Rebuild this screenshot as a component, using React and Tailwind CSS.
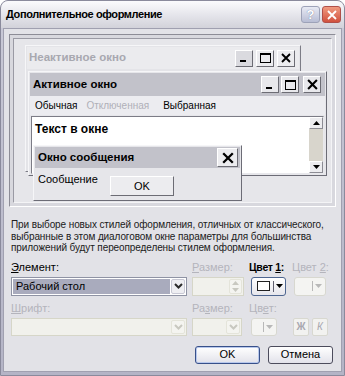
import React from "react";

const ui = "font-['Liberation_Sans',Arial,sans-serif]";

function MinGlyph() {
  return (
    <svg width="10" height="10" viewBox="0 0 10 10">
      <rect x="1" y="7" width="6" height="2" fill="#000" />
    </svg>
  );
}

function MaxGlyph() {
  return (
    <svg width="11" height="10" viewBox="0 0 11 10">
      <rect x="0.5" y="0.5" width="10" height="9" fill="none" stroke="#000" />
      <rect x="0" y="0" width="11" height="2" fill="#000" />
    </svg>
  );
}

function CloseGlyph({ size = 10 }) {
  return (
    <svg width={size} height={size} viewBox="0 0 10 10">
      <path d="M1 1 L9 9 M9 1 L1 9" stroke="#000" strokeWidth="1.9" />
    </svg>
  );
}

function CapBtn({ children, className = "" }) {
  return (
    <div
      className={`w-[18px] h-[17px] flex items-center justify-center border border-t-white border-l-white border-r-[#6c6c74] border-b-[#6c6c74] ${className}`}
    >
      {children}
    </div>
  );
}

function Arrow({ up, color = "#000" }) {
  return (
    <svg width="7" height="4" viewBox="0 0 7 4">
      <path d={up ? "M0 4 L3.5 0 L7 4 Z" : "M0 0 L7 0 L3.5 4 Z"} fill={color} />
    </svg>
  );
}

function Chevron({ color = "#2b2b2b" }) {
  return (
    <svg width="9" height="6" viewBox="0 0 9 6">
      <path d="M1 1 L4.5 4.5 L8 1" fill="none" stroke={color} strokeWidth="2" />
    </svg>
  );
}

function Preview() {
  return (
    <div className="mt-[5px] ml-[5px] w-[327px] h-[173px] border border-t-[#8c8c96] border-l-[#8c8c96] border-r-white border-b-white">
      <div className="relative w-full h-full border-[3px] border-[#d8d8de] bg-[#e6e6ea]">
        <div className="absolute inset-0 border border-t-[#9a9aa4] border-l-[#9a9aa4] border-r-[#f4f4f6] border-b-[#f4f4f6]" />

        {/* inactive window */}
        <div className="absolute left-[12px] top-[7px] w-[276px] h-[127px] bg-[#e4e4e8] border border-t-[#f6f6f8] border-l-[#f6f6f8] border-r-[#7c7c86] border-b-[#7c7c86] p-[1px]">
          <div className="h-[22px] bg-[#ebebee] flex items-center justify-between pl-[2px] pr-[4px]">
            <span className="text-[11.5px] font-bold text-[#a8a8b0]">Неактивное окно</span>
            <div className="flex gap-[3px]">
              <CapBtn className="bg-[#dadadf]"><MinGlyph /></CapBtn>
              <CapBtn className="bg-[#ececef]"><MaxGlyph /></CapBtn>
              <CapBtn className="bg-[#ececef]"><CloseGlyph /></CapBtn>
            </div>
          </div>
        </div>

        {/* active window */}
        <div className="absolute left-[15px] top-[33px] w-[299px] h-[105px] bg-[#e6e6ea] border border-t-[#f6f6f8] border-l-[#f6f6f8] border-r-[#6c6c76] border-b-[#6c6c76] p-[1px] flex flex-col">
          <div className="h-[23px] bg-[#c2c2ca] flex items-center justify-between pl-[3px] pr-[4px]">
            <span className="text-[11.5px] font-bold text-black">Активное окно</span>
            <div className="flex gap-[2px]">
              <CapBtn className="bg-[#e8e8ec]"><MinGlyph /></CapBtn>
              <CapBtn className="bg-[#e8e8ec]"><MaxGlyph /></CapBtn>
              <CapBtn className="bg-[#e8e8ec] ml-[2px]"><CloseGlyph size={11} /></CapBtn>
            </div>
          </div>
          <div className="h-[19px] bg-[#ececf0] flex items-center text-[10px] pl-[5px]">
            <span className="text-black">Обычная</span>
            <span className="ml-[9px] text-[#b0b0b8]">Отключенная</span>
            <span className="ml-[14px] text-black">Выбранная</span>
          </div>
          <div className="mx-[1px] mt-[1px] flex-1 bg-white border border-t-[#7c7c86] border-l-[#7c7c86] border-r-[#e8e8ec] border-b-[#e8e8ec] flex">
            <div className="flex-1 pl-[3px] pt-[3px] text-[12px] font-bold text-black">Текст в окне</div>
            <div className="w-[14px] flex flex-col bg-[#d8d5cc]">
              <div className="h-[12px] bg-[#ececef] flex items-center justify-center border border-t-white border-l-white border-r-[#8c8c94] border-b-[#8c8c94]">
                <Arrow up />
              </div>
              <div className="flex-1" />
              <div className="h-[12px] bg-[#ececef] flex items-center justify-center border border-t-white border-l-white border-r-[#8c8c94] border-b-[#8c8c94]">
                <Arrow />
              </div>
            </div>
          </div>
        </div>

        {/* message box */}
        <div className="absolute left-[20px] top-[107px] w-[209px] h-[56px] bg-[#e6e6ea] border border-t-[#f6f6f8] border-l-[#f6f6f8] border-r-[#6c6c76] border-b-[#6c6c76] p-[1px] flex flex-col">
          <div className="h-[21px] bg-[#c2c2ca] flex items-center justify-between pl-[3px] pr-[2px]">
            <span className="text-[11.5px] font-bold text-black">Окно сообщения</span>
            <div className="w-[21px] h-[19px] bg-[#ececef] flex items-center justify-center border border-t-white border-l-white border-r-[#6c6c74] border-b-[#6c6c74]">
              <CloseGlyph size={12} />
            </div>
          </div>
          <div className="flex items-start pl-[3px] pt-[2px] text-[11px] text-black">
            <span className="mt-[1px]">Сообщение</span>
            <div className="ml-[12px] mt-[6px] w-[64px] h-[20px] bg-[#ececef] flex items-center justify-center border border-t-white border-l-white border-r-[#6c6c74] border-b-[#6c6c74]">
              OK
            </div>
          </div>
        </div>
      </div>
    </div>
  );
}

function Combo({ w, disabled, children }) {
  return (
    <div
      className={`h-full flex items-center border ${
        disabled ? "border-[#d6d6c8] bg-[#f1f1ec]" : "border-[#8f93a4] bg-white"
      } p-[1px]`}
      style={{ width: w }}
    >
      {children}
    </div>
  );
}

export default function App() {
  return (
    <div className={`${ui} w-[345px] h-[376px] flex flex-col rounded-t-[8px] overflow-hidden bg-[#a9a9bb] border border-[#8a8a9c] text-black`}>
      {/* title bar */}
      <div className="h-[27px] shrink-0 flex items-center justify-between pl-[5px] pr-[3px] bg-gradient-to-b from-[#fbfbfd] via-[#e6e6ec] to-[#d2d2da]">
        <span className="text-[11px] font-bold tracking-[-0.4px]">Дополнительное оформление</span>
        <div className="flex gap-[2px]">
          <div className="w-[19px] h-[17px] rounded-[3px] border border-[#9da2b8] bg-gradient-to-b from-[#e8eaf4] to-[#b8bdd4] flex items-center justify-center text-[13px] font-bold text-white [text-shadow:0_0_1px_#5b6488]">
            ?
          </div>
          <div className="w-[19px] h-[17px] rounded-[3px] border border-[#b0504a] bg-gradient-to-b from-[#f09a80] to-[#d0503e] flex items-center justify-center">
            <svg width="10" height="10" viewBox="0 0 10 10">
              <path d="M1 1 L9 9 M9 1 L1 9" stroke="#fff" strokeWidth="1.8" />
            </svg>
          </div>
        </div>
      </div>

      {/* body */}
      <div className="flex-1 px-[2px] pb-[3px] bg-gradient-to-b from-[#c8c8d6] to-[#b4b4c6]">
        <div className="h-full flex flex-col bg-[#e2e2e7] border border-[#a0a0b0]">
          <Preview />

          <p className="mt-[12px] ml-[7px] text-[10px] leading-[11.5px] tracking-[-0.1px] whitespace-nowrap text-[#202020]">
            При выборе новых стилей оформления, отличных от классического,
            <br />
            выбранные в этом диалоговом окне параметры для большинства
            <br />
            приложений будут переопределены стилем оформления.
          </p>

          {/* labels row 1 */}
          <div className="mt-[7px] ml-[7px] flex text-[11px] leading-[13px] whitespace-nowrap">
            <span className="w-[181px]"><span className="underline">Э</span>лемент:</span>
            <span className="w-[57px] text-[#b4b4bc]"><span className="underline">Р</span>азмер:</span>
            <span className="w-[43px] font-bold text-[10.5px] tracking-[-0.3px]">Цвет <span className="underline">1</span>:</span>
            <span className="text-[#b4b4bc]">Цвет <span className="underline">2</span>:</span>
          </div>

          {/* controls row 1 */}
          <div className="mt-[3px] ml-[7px] h-[19px] flex">
            <Combo w={176}>
              <div className="flex-1 h-full bg-[#a9abbd] flex items-center pl-[3px] text-[11px]">Рабочий стол</div>
              <div className="w-[14px] h-full ml-[1px] flex items-center justify-center bg-[#eeeef2] border border-[#c8c8d4] rounded-[2px]">
                <Chevron />
              </div>
            </Combo>
            <div className="ml-[5px]">
              <Combo w={52} disabled>
                <div className="flex-1" />
                <div className="w-[13px] h-full flex flex-col items-center justify-center gap-[3px] bg-[#f4f4f0] border border-[#e4e4da] rounded-[2px]">
                  <Arrow up color="#c8c8c0" />
                  <Arrow color="#c8c8c0" />
                </div>
              </Combo>
            </div>
            <div className="ml-[7px] w-[35px] h-full rounded-[3px] border border-[#4e6690] bg-gradient-to-b from-white to-[#e6e6ec] flex items-center pl-[5px] pr-[2px]">
              <div className="w-[18px] h-[10px] border border-[#202020] bg-white" />
              <div className="ml-[3px] w-[1px] h-[11px] bg-[#606070]" />
              <div className="ml-[2px]"><Arrow /></div>
            </div>
            <div className="ml-[8px] w-[32px] h-full rounded-[3px] border border-[#d8d8d0] bg-[#f4f4f2] flex items-center justify-end pr-[3px]">
              <div className="w-[1px] h-[10px] bg-[#b8b8b8]" />
              <div className="ml-[2px]"><Arrow color="#b8b8b8" /></div>
            </div>
          </div>

          {/* labels row 2 */}
          <div className="mt-[6px] ml-[7px] flex text-[11px] leading-[13px] text-[#b4b4bc]">
            <span className="w-[181px]"><span className="underline">Ш</span>рифт:</span>
            <span className="w-[57px]">Ра<span className="underline">з</span>мер:</span>
            <span>Цв<span className="underline">е</span>т:</span>
          </div>

          {/* controls row 2 */}
          <div className="mt-[3px] ml-[7px] h-[18px] flex">
            <Combo w={176} disabled>
              <div className="flex-1" />
              <div className="w-[14px] h-full flex items-center justify-center bg-[#f4f4f0] border border-[#e4e4da] rounded-[2px]">
                <Chevron color="#c8c8c0" />
              </div>
            </Combo>
            <div className="ml-[5px]">
              <Combo w={50} disabled>
                <div className="flex-1" />
                <div className="w-[14px] h-full flex items-center justify-center bg-[#f4f4f0] border border-[#e4e4da] rounded-[2px]">
                  <Chevron color="#c8c8c0" />
                </div>
              </Combo>
            </div>
            <div className="ml-[9px] w-[26px] h-full rounded-[3px] border border-[#d8d8d0] bg-[#f4f4f2] flex items-center justify-end pr-[3px]">
              <div className="w-[1px] h-[10px] bg-[#b8b8b8]" />
              <div className="ml-[2px]"><Arrow color="#b8b8b8" /></div>
            </div>
            <div className="ml-[16px] w-[16px] h-full rounded-[2px] border border-[#d8d8d0] bg-[#f2f2f0] flex items-center justify-center text-[10px] font-bold text-[#a8a8b0]">
              Ж
            </div>
            <div className="ml-[3px] w-[16px] h-full rounded-[2px] border border-[#d8d8d0] bg-[#f2f2f0] flex items-center justify-center text-[10px] italic text-[#a8a8b0]">
              К
            </div>
          </div>

          {/* buttons */}
          <div className="mt-[10px] flex justify-end gap-[8px] pr-[8px]">
            <div className="w-[65px] h-[18px] rounded-[3px] border border-[#38508a] bg-gradient-to-b from-white to-[#e2e2ea] shadow-[inset_0_0_0_1px_#b8c8ec] flex items-center justify-center text-[11px]">
              OK
            </div>
            <div className="w-[65px] h-[18px] rounded-[3px] border border-[#4c4c5c] bg-gradient-to-b from-white to-[#e2e2ea] flex items-center justify-center text-[11px]">
              Отмена
            </div>
          </div>
        </div>
      </div>
    </div>
  );
}
